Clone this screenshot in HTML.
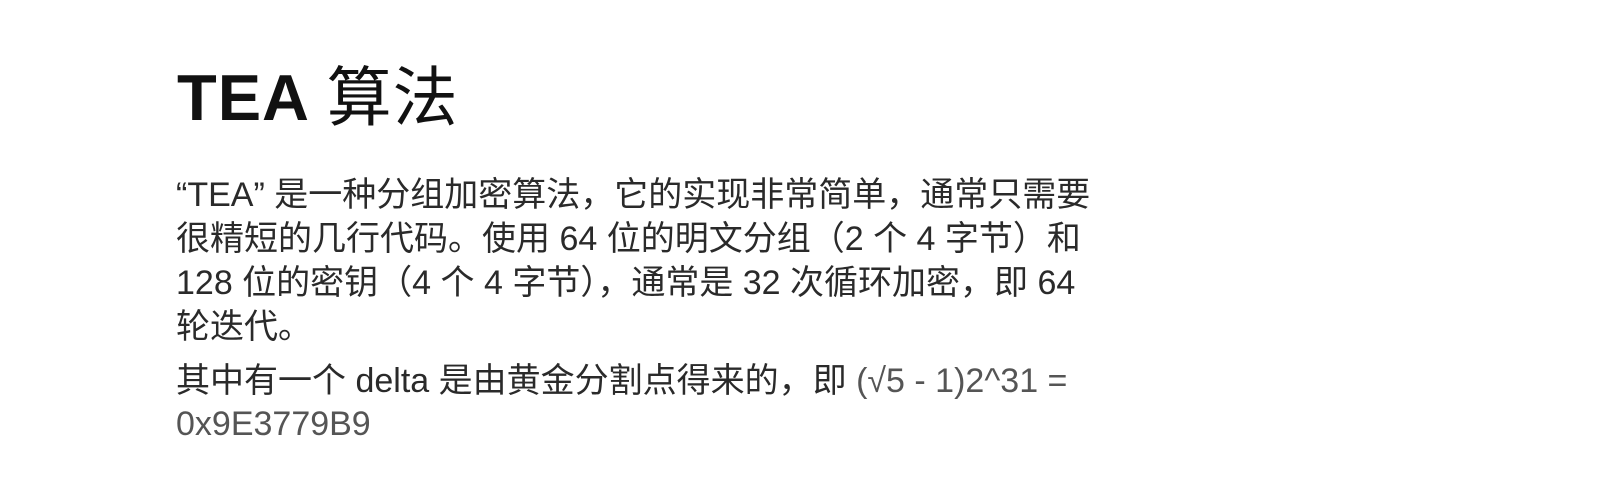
<!DOCTYPE html>
<html><head><meta charset="utf-8"><style>
body{margin:0;width:1618px;height:501px;background:#fff;overflow:hidden;font-family:"Liberation Sans","Noto Sans CJK SC",sans-serif;}
h1{position:absolute;left:177px;top:60px;margin:0;font-size:65px;font-weight:bold;color:#111;line-height:76px;letter-spacing:1px;}
h1 span{font-weight:normal;}
.p{position:absolute;left:176px;font-size:34px;line-height:44px;color:#2a2a2a;white-space:nowrap;}
</style></head><body>
<h1>TEA <span>算法</span></h1>
<div class="p" style="top:173px">“TEA” 是一种分组加密算法，它的实现非常简单，通常只需要<br>很精短的几行代码。使用 64 位的明文分组（2 个 4 字节）和<br>128 位的密钥（4 个 4 字节），通常是 32 次循环加密，即 64<br>轮迭代。</div>
<div class="p" style="top:360px;line-height:43px">其中有一个 delta 是由黄金分割点得来的，即 <span style="color:#555">(√5 - 1)2^31 =<br>0x9E3779B9</span></div>
</body></html>
